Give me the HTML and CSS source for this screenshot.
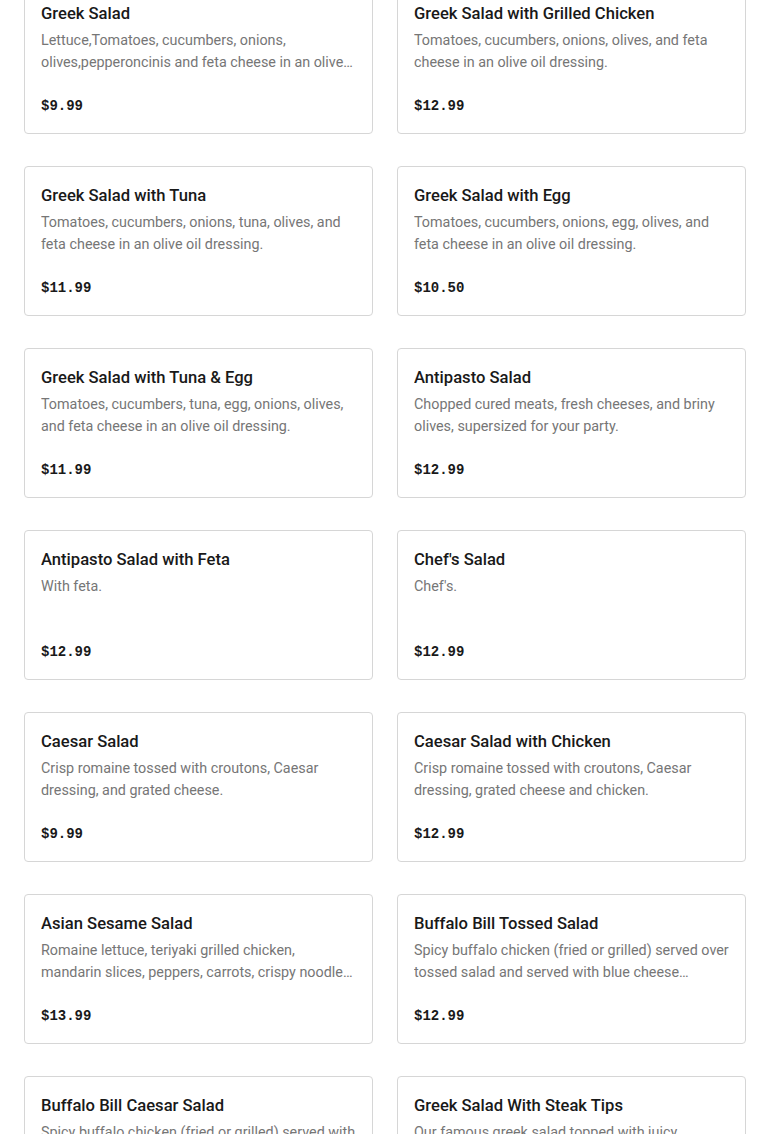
FILE: index.html
```html
<!DOCTYPE html>
<html>
<head>
<meta charset="utf-8">
<link rel="stylesheet" href="styles.css">
</head>
<body>
<div class="grid">
  <div class="card"><div class="title">Greek Salad</div><div class="desc">Lettuce,Tomatoes, cucumbers, onions, olives,pepperoncinis and feta cheese in an olive oil dressing.</div><div class="price">$9.99</div></div>
  <div class="card"><div class="title">Greek Salad with Grilled Chicken</div><div class="desc">Tomatoes, cucumbers, onions, olives, and feta cheese in an olive oil dressing.</div><div class="price">$12.99</div></div>
  <div class="card"><div class="title">Greek Salad with Tuna</div><div class="desc">Tomatoes, cucumbers, onions, tuna, olives, and feta cheese in an olive oil dressing.</div><div class="price">$11.99</div></div>
  <div class="card"><div class="title">Greek Salad with Egg</div><div class="desc">Tomatoes, cucumbers, onions, egg, olives, and feta cheese in an olive oil dressing.</div><div class="price">$10.50</div></div>
  <div class="card"><div class="title">Greek Salad with Tuna &amp; Egg</div><div class="desc">Tomatoes, cucumbers, tuna, egg, onions, olives, and feta cheese in an olive oil dressing.</div><div class="price">$11.99</div></div>
  <div class="card"><div class="title">Antipasto Salad</div><div class="desc">Chopped cured meats, fresh cheeses, and briny olives, supersized for your party.</div><div class="price">$12.99</div></div>
  <div class="card"><div class="title">Antipasto Salad with Feta</div><div class="desc">With feta.</div><div class="price">$12.99</div></div>
  <div class="card"><div class="title">Chef's Salad</div><div class="desc">Chef's.</div><div class="price">$12.99</div></div>
  <div class="card"><div class="title">Caesar Salad</div><div class="desc">Crisp romaine tossed with croutons, Caesar dressing, and grated cheese.</div><div class="price">$9.99</div></div>
  <div class="card"><div class="title">Caesar Salad with Chicken</div><div class="desc">Crisp romaine tossed with croutons, Caesar dressing, grated cheese and chicken.</div><div class="price">$12.99</div></div>
  <div class="card"><div class="title">Asian Sesame Salad</div><div class="desc">Romaine lettuce, teriyaki grilled chicken, mandarin slices, peppers, carrots, crispy noodles and sesame dressing.</div><div class="price">$13.99</div></div>
  <div class="card"><div class="title">Buffalo Bill Tossed Salad</div><div class="desc">Spicy buffalo chicken (fried or grilled) served over tossed salad and served with blue cheese dressing.</div><div class="price">$12.99</div></div>
  <div class="card"><div class="title">Buffalo Bill Caesar Salad</div><div class="desc">Spicy buffalo chicken (fried or grilled) served with Caesar salad and blue cheese dressing.</div><div class="price">$12.99</div></div>
  <div class="card"><div class="title">Greek Salad With Steak Tips</div><div class="desc">Our famous greek salad topped with juicy marinated steak tips.</div><div class="price">$15.99</div></div>
</div>
</body>
</html>
```
FILE: styles.css
```css
html, body {
  margin: 0;
  padding: 0;
  background: #ffffff;
}
body {
  font-family: "Roboto", "Liberation Sans", sans-serif;
  color: #191919;
  overflow: hidden;
}
.grid {
  display: grid;
  grid-template-columns: 1fr 1fr;
  column-gap: 24px;
  row-gap: 32px;
  padding: 0 24px;
  margin-top: -16px;
}
.card {
  border: 1px solid #d6d6d6;
  border-radius: 4px;
  padding: 17px 16px 17px 16px;
  height: 150px;
  box-sizing: border-box;
  display: flex;
  flex-direction: column;
}
.title {
  font-size: 16.6px;
  font-weight: 500;
  line-height: 24px;
  color: #191919;
  white-space: nowrap;
  overflow: hidden;
}
.desc {
  margin-top: 4px;
  font-size: 14.35px;
  line-height: 22px;
  color: #767676;
  height: 44px;
  overflow: hidden;
  display: -webkit-box;
  -webkit-line-clamp: 2;
  -webkit-box-orient: vertical;
}
.price {
  margin-top: 22px;
  font-family: "Liberation Mono", "DejaVu Sans Mono", monospace;
  font-weight: 700;
  font-size: 14px;
  line-height: 20px;
  color: #191919;
}
```
